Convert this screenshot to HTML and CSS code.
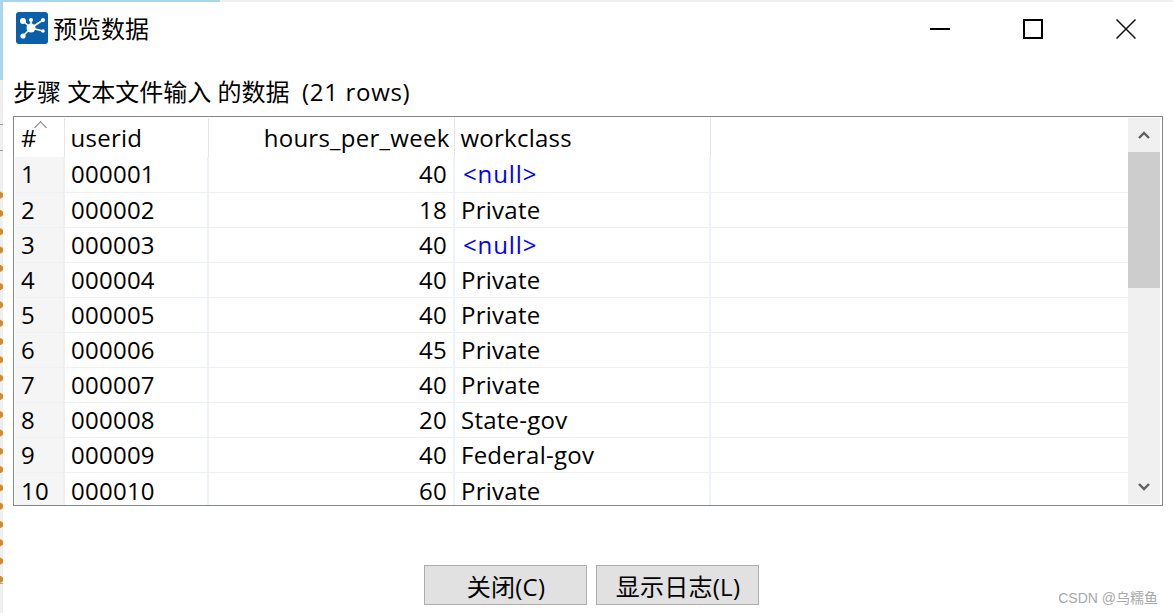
FILE: index.html
```html
<!DOCTYPE html>
<html lang="zh-CN">
<head>
  <meta charset="UTF-8">
  <title>预览数据</title>
  <link rel="stylesheet" href="styles.css">
</head>
<body>
  <div class="desk-top"></div>
  <div class="screen">
    <div class="desk-edge">
      <div class="edge-blue"></div>
      <div class="edge-lines"></div>
      <div class="edge-dots"></div>
    </div>
    <div class="dialog">
      <div class="titlebar">
        <svg class="app-icon" viewBox="0 0 32 32">
          <rect width="32" height="32" rx="3" fill="#0a5fa8"/>
          <g stroke="#fff" stroke-width="1.6" fill="none">
            <path d="M15 16 L7 9 M15 16 L15 8 M15 16 L27 8 M15 16 L7 24 M15 16 L27 19"/>
          </g>
          <g fill="#fff">
            <circle cx="15" cy="16" r="4.5"/>
            <circle cx="7" cy="9" r="3"/>
            <circle cx="15" cy="8" r="2"/>
            <circle cx="27" cy="8" r="2"/>
            <circle cx="7" cy="24" r="2.6"/>
            <circle cx="27" cy="19" r="1.8"/>
          </g>
        </svg>
        <span class="title-text">预览数据</span>
        <div class="win-buttons">
          <svg class="win-btn" viewBox="0 0 20 20"><path d="M0 10H20" stroke="#000" stroke-width="2"/></svg>
          <svg class="win-btn" viewBox="0 0 20 20"><rect x="1" y="1" width="18" height="18" fill="none" stroke="#000" stroke-width="2"/></svg>
          <svg class="win-btn" viewBox="0 0 20 20"><path d="M0.5 0.5L19.5 19.5M19.5 0.5L0.5 19.5" stroke="#111" stroke-width="1.5"/></svg>
        </div>
      </div>

      <div class="caption">步骤 文本文件输入 的数据&nbsp; <span class="row-count">(21 rows)</span></div>

      <div class="grid-box">
        <div class="grid-view">
          <table class="grid">
            <colgroup>
              <col class="c-num"><col class="c-id"><col class="c-hours"><col class="c-work"><col>
            </colgroup>
            <thead>
              <tr><th class="num sorted">#</th><th>userid</th><th class="right">hours_per_week</th><th>workclass</th><th></th></tr>
            </thead>
            <tbody>
              <tr><td class="num">1</td><td>000001</td><td class="right">40</td><td class="null">&lt;null&gt;</td><td></td></tr>
              <tr><td class="num">2</td><td>000002</td><td class="right">18</td><td>Private</td><td></td></tr>
              <tr><td class="num">3</td><td>000003</td><td class="right">40</td><td class="null">&lt;null&gt;</td><td></td></tr>
              <tr><td class="num">4</td><td>000004</td><td class="right">40</td><td>Private</td><td></td></tr>
              <tr><td class="num">5</td><td>000005</td><td class="right">40</td><td>Private</td><td></td></tr>
              <tr><td class="num">6</td><td>000006</td><td class="right">45</td><td>Private</td><td></td></tr>
              <tr><td class="num">7</td><td>000007</td><td class="right">40</td><td>Private</td><td></td></tr>
              <tr><td class="num">8</td><td>000008</td><td class="right">20</td><td>State-gov</td><td></td></tr>
              <tr><td class="num">9</td><td>000009</td><td class="right">40</td><td>Federal-gov</td><td></td></tr>
              <tr><td class="num">10</td><td>000010</td><td class="right">60</td><td>Private</td><td></td></tr>
            </tbody>
          </table>
        </div>
        <div class="scrollbar">
          <div class="arrow"><svg viewBox="0 0 12 8"><path d="M1 7L6 2L11 7" fill="none" stroke="#606060" stroke-width="2.4"/></svg></div>
          <div class="thumb"></div>
          <div class="track"></div>
          <div class="arrow"><svg viewBox="0 0 12 8"><path d="M1 1L6 6L11 1" fill="none" stroke="#606060" stroke-width="2.4"/></svg></div>
        </div>
      </div>

      <div class="actions">
        <button class="btn">关闭(C)</button>
        <button class="btn">显示日志(L)</button>
      </div>
      <div class="watermark">CSDN @乌糯鱼</div>
    </div>
  </div>
</body>
</html>
```

FILE: styles.css
```css
html, body {
  margin: 0;
  height: 100%;
}
body {
  display: flex;
  flex-direction: column;
  width: 1173px;
  height: 613px;
  overflow: hidden;
  background-color: #fff;
  color: #000;
  font-family: "Open Sans", "Noto Sans CJK SC", sans-serif;
  letter-spacing: 0.25px;
}
/* bits of the desktop showing behind the dialog */
.desk-top {
  height: 2px;
  flex: none;
  background: linear-gradient(to right, #a9d6ee 220px, #f0f0f0 220px);
}
.screen {
  flex: 1;
  display: flex;
  min-height: 0;
}
.desk-edge {
  width: 3px;
  flex: none;
  background-color: #efefef;
}
.edge-blue {
  height: 78px;
  background-color: #a9d6ee;
}
.edge-lines {
  height: 106px;
  background: linear-gradient(to bottom, transparent 44px, #999 44px, #999 45px, transparent 45px, transparent 70px, #999 70px, #999 71px, transparent 71px);
}
.edge-dots {
  height: 397px;
  background-image: radial-gradient(circle at 0 50%, #d08a30 3px, transparent 3.5px);
  background-size: 3px 18.3px;
  background-repeat: repeat-y;
  border-bottom: 1px solid #aaa;
}
.dialog {
  flex: 1;
  display: flex;
  flex-direction: column;
  position: relative;
  padding: 0 10px;
  min-width: 0;
}
.titlebar {
  display: flex;
  align-items: center;
  height: 54px;
  margin-left: 3px;
}
.app-icon {
  width: 32px;
  height: 32px;
  position: relative;
  top: -1px;
}
.title-text {
  margin-left: 5px;
  font-family: "Noto Sans CJK SC", sans-serif;
  font-size: 24px;
  line-height: 32px;
  letter-spacing: 0;
  position: relative;
  top: -1px;
}
.win-buttons {
  margin-left: auto;
  display: flex;
  gap: 73px;
  margin-right: 27px;
}
.win-btn {
  width: 20px;
  height: 20px;
}
.caption {
  height: 60px;
  line-height: 72px;
  font-size: 24px;
  letter-spacing: 0;
}
.row-count {
  letter-spacing: 0.7px;
}
.grid-box {
  display: flex;
  width: 1150px;
  height: 390px;
  box-sizing: border-box;
  border: 1px solid #82878c;
  padding: 1px 2px 1px 1px;
}
.grid-view {
  flex: 1;
  min-width: 0;
}
.grid {
  width: 100%;
  border-collapse: collapse;
  table-layout: fixed;
  font-size: 24px;
}
.c-num { width: 49px; }
.c-id { width: 144px; }
.c-hours { width: 246px; }
.c-work { width: 256px; }
.grid th {
  box-sizing: border-box;
  height: 39px;
  padding: 0 6px;
  font-weight: 400;
  text-align: left;
  border-right: 1px solid #e6e6e6;
}
.grid th.right {
  padding-right: 4px;
}
.grid th:last-child, .grid td:last-child {
  border-right: none;
}
.grid td {
  box-sizing: border-box;
  height: 35px;
  padding: 0 6px;
  line-height: 30px;
  white-space: nowrap;
  border-right: 2px solid #edf3fb;
  border-bottom: 1px solid #eef0f3;
}
/* last row is only partly in view */
.grid tbody tr:last-child td {
  height: 32px;
  padding-top: 4px;
  line-height: 28px;
  border-bottom: none;
}
.grid .right {
  text-align: right;
}
.grid td.num {
  background-color: #f5f5f5;
  border-right: 2px solid #f0f0f0;
}
.grid .null {
  color: #0000ff;
  letter-spacing: 0.9px;
  padding-left: 8px;
}
.sorted {
  position: relative;
}
.sorted::after {
  content: "";
  position: absolute;
  top: 5px;
  left: 21px;
  width: 8px;
  height: 8px;
  border-top: 1px solid #777;
  border-left: 1px solid #777;
  transform: rotate(45deg);
}
.scrollbar {
  width: 32px;
  flex: none;
  display: flex;
  flex-direction: column;
  background-color: #f0f0f0;
}
.arrow {
  height: 34px;
  display: flex;
  align-items: center;
  justify-content: center;
}
.arrow svg {
  width: 12px;
  height: 8px;
}
.thumb {
  height: 136px;
  background-color: #cdcdcd;
}
.track {
  flex: 1;
}
.actions {
  display: flex;
  justify-content: center;
  gap: 9px;
  margin-top: 59px;
  margin-left: 6px;
}
.btn {
  width: 163px;
  height: 40px;
  padding: 0 0 0 2px;
  border: 1px solid #adadad;
  background-color: #e1e1e1;
  font-family: "Open Sans", "Noto Sans CJK SC", sans-serif;
  font-size: 24px;
  letter-spacing: 0.25px;
  color: #000;
}
.watermark {
  position: absolute;
  right: 15px;
  bottom: 6px;
  font-family: "Liberation Sans", "Noto Sans CJK SC", sans-serif;
  font-size: 14px;
  letter-spacing: 0;
  color: #a8a8a8;
}
```
